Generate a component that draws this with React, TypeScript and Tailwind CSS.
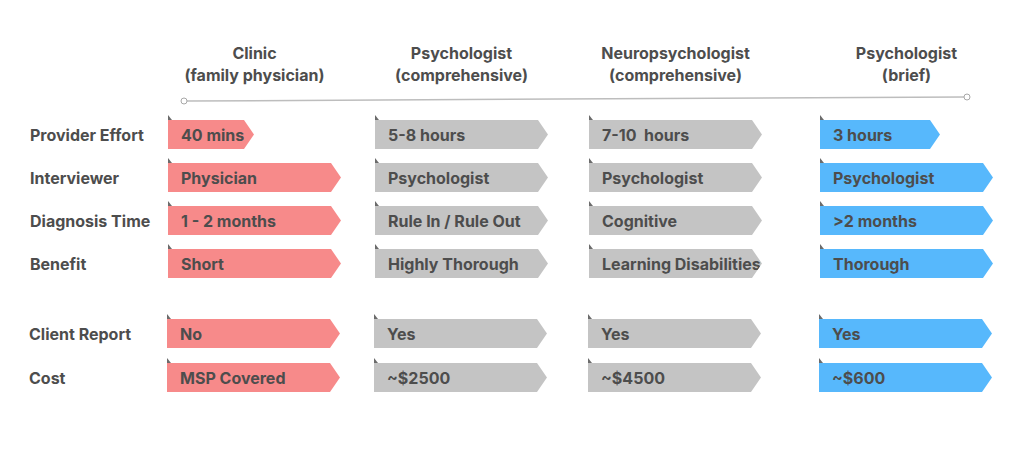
import React from 'react';

type Tone = 'red' | 'gray' | 'blue';

const toneClass: Record<Tone, string> = {
    red: 'bg-[#f78a8a]',
    gray: 'bg-[#c4c4c4]',
    blue: 'bg-[#57b8fc]',
};

const colWidths = ['w-[207px]', 'w-[214px]', 'w-[231px]', 'w-[173px]'];
const tones: Tone[] = ['red', 'gray', 'gray', 'blue'];

const headers = [
    ['Clinic', '(family physician)'],
    ['Psychologist', '(comprehensive)'],
    ['Neuropsychologist', '(comprehensive)'],
    ['Psychologist', '(brief)'],
];

type Row = { label: string; cells: { text: string; w?: string }[] };

const topRows: Row[] = [
    {
        label: 'Provider Effort',
        cells: [
            { text: '40 mins', w: 'w-[86px]' },
            { text: '5-8 hours' },
            { text: '7-10\u00a0 hours' },
            { text: '3 hours', w: 'w-[120px]' },
        ],
    },
    {
        label: 'Interviewer',
        cells: [{ text: 'Physician' }, { text: 'Psychologist' }, { text: 'Psychologist' }, { text: 'Psychologist' }],
    },
    {
        label: 'Diagnosis Time',
        cells: [{ text: '1 - 2 months' }, { text: 'Rule In / Rule Out' }, { text: 'Cognitive' }, { text: '>2 months' }],
    },
    {
        label: 'Benefit',
        cells: [{ text: 'Short' }, { text: 'Highly Thorough' }, { text: 'Learning Disabilities' }, { text: 'Thorough' }],
    },
];

const bottomRows: Row[] = [
    {
        label: 'Client Report',
        cells: [{ text: 'No' }, { text: 'Yes' }, { text: 'Yes' }, { text: 'Yes' }],
    },
    {
        label: 'Cost',
        cells: [{ text: 'MSP Covered' }, { text: '~$2500' }, { text: '~$4500' }, { text: '~$600' }],
    },
];

function Banner({ text, tone, w }: { text: string; tone: Tone; w?: string }) {
    return (
        <div className={`relative h-[29px] ${w ?? 'w-[173px]'}`}>
            {/* folded corner */}
            <div className="absolute left-0 -top-[5px] w-0 h-0 border-l-[4px] border-l-[#6b6b6b] border-t-[5px] border-t-transparent" />
            <div
                className={`h-full w-full ${toneClass[tone]} flex items-center pl-[13px] whitespace-nowrap
                    [clip-path:polygon(0_0,calc(100%-10px)_0,100%_50%,calc(100%-10px)_100%,0_100%)]`}
            >
                <span className="text-[16px] font-bold text-[#4d4d4d]">{text}</span>
            </div>
        </div>
    );
}

function TableRow({ row }: { row: Row }) {
    return (
        <div className="flex items-center h-[29px]">
            <div className="w-[138px] text-[16px] font-bold text-[#4d4d4d] whitespace-nowrap">{row.label}</div>
            {row.cells.map((c, i) => (
                <div key={i} className={colWidths[i]}>
                    <Banner text={c.text} tone={tones[i]} w={c.w} />
                </div>
            ))}
        </div>
    );
}

export default function App() {
    return (
        <div className="w-[1024px] h-[452px] bg-white overflow-hidden font-['Inter','Liberation_Sans',sans-serif]">
            {/* Column headings */}
            <div className="flex pt-[42px] pl-[168px]">
                {headers.map((h, i) => (
                    <div key={i} className={colWidths[i]}>
                        <div className="w-[173px] text-center text-[16px] leading-[22px] font-bold text-[#4d4d4d] whitespace-nowrap">
                            <div>{h[0]}</div>
                            <div>{h[1]}</div>
                        </div>
                    </div>
                ))}
            </div>

            {/* Timeline rule */}
            <svg width="1024" height="34" className="block">
                <line x1="187" y1="15" x2="964" y2="11" stroke="#bdbdbd" strokeWidth="1.5" />
                <circle cx="184" cy="15" r="3" fill="white" stroke="#a8a8a8" strokeWidth="1" />
                <circle cx="967" cy="11" r="3" fill="white" stroke="#a8a8a8" strokeWidth="1" />
            </svg>

            <div className="pl-[30px] flex flex-col gap-[14px]">
                {topRows.map((r) => (
                    <TableRow key={r.label} row={r} />
                ))}
            </div>

            <div className="pl-[29px] mt-[41px] flex flex-col gap-[15px]">
                {bottomRows.map((r) => (
                    <TableRow key={r.label} row={r} />
                ))}
            </div>
        </div>
    );
}
